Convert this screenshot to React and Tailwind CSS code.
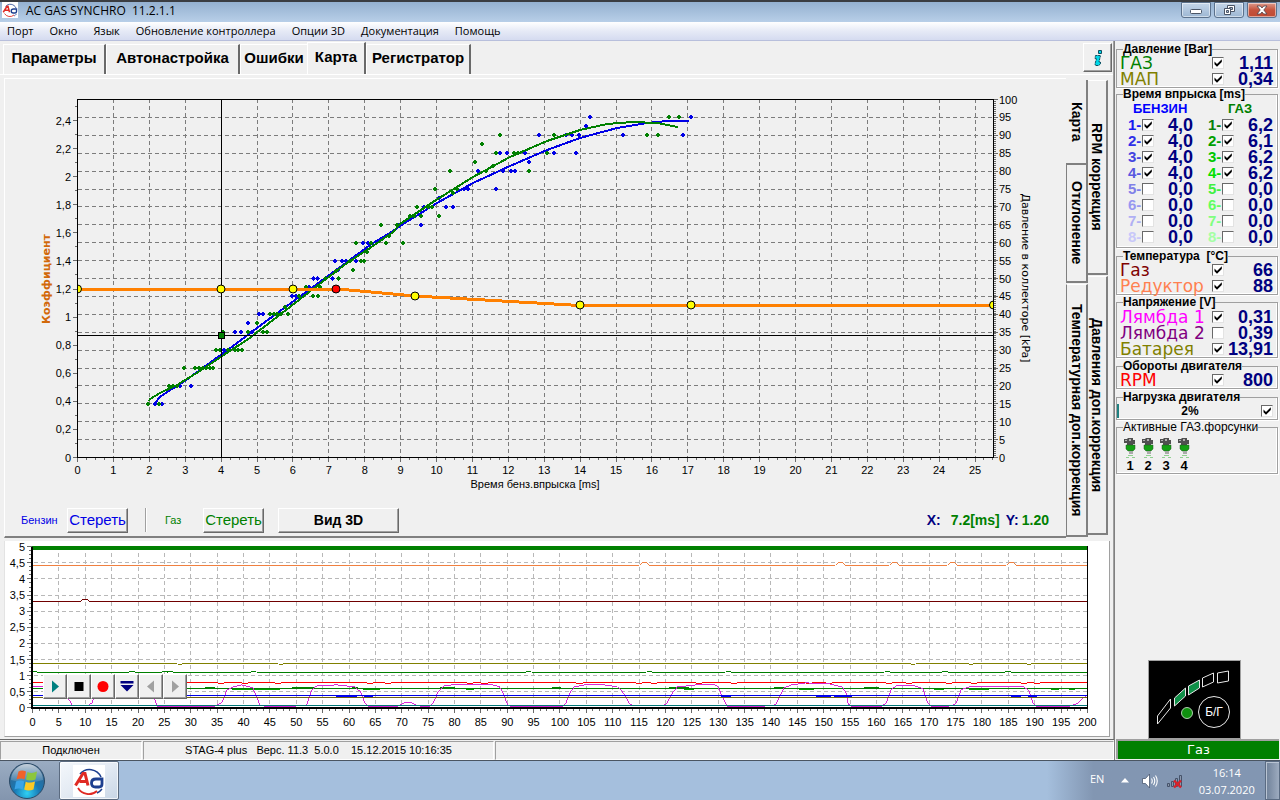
import React from "react";

/* ---------- shared bits ---------- */

const ARIAL = "font-['Liberation_Sans',Arial,sans-serif]";
const WIDE = "font-['DejaVu_Sans',Verdana,sans-serif]";
const SEGOE = "font-['Open_Sans','Noto_Sans',sans-serif]";
const RAISED =
  "border border-t-white border-l-white border-r-[#696969] border-b-[#696969] shadow-[inset_-1px_-1px_0_#a0a0a0] bg-[#f0f0f0]";

function Check({ label, on }) {
  return (
    <span className="grid size-3 shrink-0">
      <input
        type="checkbox"
        aria-label={label}
        defaultChecked={on}
        className="peer col-start-1 row-start-1 size-3 appearance-none border border-t-[#696969] border-l-[#696969] border-r-[#e3e3e3] border-b-[#e3e3e3] bg-white"
      />
      <svg viewBox="0 0 12 12" className="pointer-events-none col-start-1 row-start-1 hidden size-3 peer-checked:block" aria-hidden="true">
        <path d="M2.500 4.500 L5 7 L9.800 2.200 V5 L5 9.800 L2.500 7.300 Z" fill="#000" />
      </svg>
    </span>
  );
}

function Logo({ className }) {
  return (
    <svg viewBox="0 0 32 32" className={className} aria-hidden="true">
      <rect width="32" height="32" fill="#fff" />
      <path d="M7 9 A12.5 12.5 0 0 1 28 12" fill="none" stroke="#1d3f8f" strokeWidth="1.6" />
      <path d="M29 24 A13 13 0 0 1 24 28" fill="none" stroke="#1d3f8f" strokeWidth="1.4" />
      <path d="M5 23 A12.5 12.5 0 0 0 24 26" fill="none" stroke="#e02a24" strokeWidth="1.8" />
      <path d="M2.500 20.500 L10 8.500 H12 L15 20.500 M6.500 16.500 H13.500" fill="none" stroke="#e02a24" strokeWidth="3" />
      <path d="M29 14 H23 Q18.500 14 18.500 18 Q18.500 22 22.500 22 H26 Q29 22 29 19 V12.500" fill="none" stroke="#1d3f8f" strokeWidth="2.800" />
    </svg>
  );
}

/* ---------- title bar and menu ---------- */

const CAPTION =
  "flex h-4 w-[30px] items-center justify-center rounded-b-[3px] border border-[#5b718c] shadow-[inset_0_0_0_1px_#ffffff80]";

function TitleBar() {
  return (
    <header className="flex h-[22px] items-start border-t-2 border-[#3a3d42] bg-linear-to-b from-[#94b1d0] to-[#b8cfe8] pr-[3px] pl-0.5">
      <Logo className="size-4" />
      <h1 className={`${SEGOE} ml-2 text-xs leading-[18px] whitespace-pre text-black`}>AC GAS SYNCHRO  11.2.1.1</h1>
      <div className="ml-auto flex gap-[3px]">
        <button aria-label="Свернуть" className={`${CAPTION} bg-linear-to-b from-[#c5d6e9] to-[#9db7d3]`}>
          <svg viewBox="0 0 12 6" className="mt-1 h-1.5 w-3"><rect x="0.5" y="0.5" width="11" height="4" rx="1" fill="#fff" stroke="#4b5566" /></svg>
        </button>
        <button aria-label="Восстановить" className={`${CAPTION} bg-linear-to-b from-[#c5d6e9] to-[#9db7d3]`}>
          <svg viewBox="0 0 12 12" className="size-3" fill="#fff" stroke="#4b5566">
            <path d="M4.500 1.500h7v6h-7z" /><path d="M6.500 3.500h3v2h-3z" fill="#a9c0da" />
            <path d="M1.500 4.500h6v6h-6z" /><path d="M3.500 6.500h2v2h-2z" fill="#a9c0da" />
          </svg>
        </button>
        <button aria-label="Закрыть" className={`${CAPTION} bg-linear-to-b from-[#dc9a8c] via-[#c5523c] to-[#bf4a33]`}>
          <svg viewBox="0 0 12 10" className="h-2.5 w-3">
            <path d="M1 1h3.300l1.700 2 1.700-2h3.300l-3.200 4 3.200 4h-3.300l-1.700-2-1.700 2H1L4.200 5z" fill="#fff" stroke="#5a4a50" strokeWidth="0.9" />
          </svg>
        </button>
      </div>
    </header>
  );
}

const MENU = ["Порт", "Окно", "Язык", "Обновление контроллера", "Опции 3D", "Документация", "Помощь"];

function MenuBar() {
  return (
    <nav className={`${SEGOE} flex h-[19px] items-center gap-4 border-b border-[#b8bfdc] bg-linear-to-b from-white via-[#e6eaf6] to-[#d5dbf0] px-[7px] text-[11px]`}>
      {MENU.map((m) => (
        <button key={m} className="whitespace-nowrap">{m}</button>
      ))}
    </nav>
  );
}

const INACTIVE = "h-[30px] border-t border-white";
const TABS = [
  { name: "Параметры", cls: `w-[103px] ${INACTIVE} border-r-2 border-r-[#696969]` },
  { name: "Автонастройка", cls: `w-[134px] ${INACTIVE} border-r-2 border-r-[#696969]` },
  { name: "Ошибки", cls: `w-[67px] ${INACTIVE}` },
  { name: "Карта", cls: "w-[59px] h-8 border-t border-white border-r-2 border-r-[#696969]" },
  { name: "Регистратор", cls: `w-[105px] ${INACTIVE} border-r-2 border-r-[#696969]` },
];

function TabRow() {
  return (
    <div className="flex h-[34px] items-end border-b border-white pl-[3px]">
      {TABS.map((t) => (
        <button
          key={t.name}
          className={`${ARIAL} ${t.cls} border-l border-l-white pb-1 text-center text-[15px] leading-6 font-bold whitespace-nowrap text-black`}
        >
          {t.name}
        </button>
      ))}
      <button aria-label="Информация" className={`${RAISED} mr-px mb-0.5 ml-auto flex size-[29px] items-center justify-center`}>
        <svg viewBox="0 0 10 16" className="h-4 w-2.5">
          <path d="M5.500 0.500h3v3h-3z" fill="#00d8e8" stroke="#003c50" strokeWidth="0.9" />
          <path d="M2.500 5.500h5l-1.500 6.500h1.500v2l-2 1.500h-3l-0.500-1.500 1.500-5.500h-1.500z" fill="#00d8e8" stroke="#003c50" strokeWidth="0.9" strokeDasharray="2 0.600" />
        </svg>
      </button>
    </div>
  );
}

/* ---------- map chart ---------- */

const MX = (v) => 77.5 + v * 35.9;
const MK = (v) => 457.5 - v * 3.58;
const MC = (v) => 457.5 - v * 140.4;

const GREEN_DOTS = [
  [148, 15], [159, 15], [169, 20], [173, 20], [177, 20], [195, 25], [199, 25], [203, 25], [206, 25], [210, 25], [213, 25],
  [184, 25], [216, 30], [220, 30], [228, 30], [235, 30], [238, 30], [242, 30], [223, 35], [248, 35], [263, 35], [267, 35], [257, 37.5],
  [270, 40], [274, 40], [277, 40], [281, 40], [288, 40], [285, 42], [313, 45], [318, 45], [299, 45], [306, 47.5], [320, 47.500],
  [325, 50], [338, 50], [336, 52], [353, 52.5], [350, 55], [361, 55], [364, 55], [367, 57.5], [356, 60], [371, 60], [386, 60], [403, 60],
  [389, 62], [381, 65], [397, 65], [410, 67.5], [414, 67.5], [421, 67.5], [439, 67.5], [417, 70], [428, 70], [432, 70], [435, 75], [453, 74],
  [457, 75], [450, 80], [486, 80], [529, 80], [475, 82.5], [493, 81.5], [482, 87.5], [496, 85], [514, 85], [518, 85], [547, 85],
  [500, 90], [554, 90], [647, 90], [658, 90], [669, 95], [679, 95],
];
const BLUE_DOTS = [
  [155, 15], [159, 15], [162, 15], [180, 20], [191, 20], [184, 25], [224, 30], [235, 35], [241, 35], [252, 35], [248, 37.5],
  [259, 40], [263, 40], [281, 40], [292, 45], [296, 45], [302, 45], [309, 47.5], [313, 50], [317, 50], [332, 50], [338, 52.5],
  [335, 55], [342, 55], [346, 55], [356, 55], [363, 60], [368, 60], [399, 65], [421, 65], [424, 70], [446, 70], [453, 70],
  [439, 72.5], [464, 75], [468, 75], [496, 75], [478, 80], [503, 80], [511, 80], [515, 80], [529, 82.5], [500, 85], [507, 85],
  [525, 85], [554, 85], [576, 85], [539, 90], [566, 90], [572, 90], [579, 90], [623, 90], [683, 90], [586, 92.5], [590, 95], [691, 95],
];
const BLUE_CURVE = "155,403 160,397 167,392 182,383 200,370 233,346 257,328 280,311 313,287 347,262 370,245 393,231 400,226 437,203 473,183 510,166 547,150 580,138 617,128 647,123 667,121 689,121";
const GREEN_CURVE = "149,401 150,399 160,393 177,385 200,371 228,352 247,340 277,317 313,289 347,263 370,248 393,232 400,224 433,202 473,177 510,157 547,141 580,130 607,124 633,122 657,123 678,127";
const KNOTS = [[77, 289], [221, 289], [293, 289], [336, 289], [415, 296], [580, 305], [691, 305], [993, 305]];

const diamonds = (pts) => pts.map(([x, k]) => `M${x - 2.5} ${MK(k)}l2.5 -2.500l2.500 2.500l-2.500 2.500z`).join("");
const range = (n) => Array.from({ length: n }, (_, i) => i);

function MapChart() {
  return (
    <svg viewBox="5 79 1061 421" className={`${ARIAL} block h-auto w-full text-[11px]`} role="img" aria-label="Карта коэффициентов">
      <g stroke="#7c7c7c" strokeDasharray="4 3" shapeRendering="crispEdges">
        {range(25).map((i) => <line key={i} x1={MX(i + 1)} x2={MX(i + 1)} y1="99" y2="457" />)}
        {range(19).map((i) => <line key={i} x1="78" x2="993" y1={MK(5 * (i + 1))} y2={MK(5 * (i + 1))} />)}
      </g>
      <g stroke="#6a6a6a" shapeRendering="crispEdges">
        {range(103).map((i) => <line key={i} x1={MX(i / 4)} x2={MX(i / 4)} y1="458" y2={i % 4 ? 460 : 462} />)}
        {range(26).map((i) => <line key={i} x1={i % 2 ? 75 : 73} x2="77" y1={MC(i / 10)} y2={MC(i / 10)} />)}
        {range(179).map((i) => <line key={i} x1="994" x2="996" y1={99.5 + i * 2} y2={99.5 + i * 2} />)}
        {range(21).map((i) => <line key={i} x1="994" x2="998" y1={MK(i * 5)} y2={MK(i * 5)} />)}
      </g>
      <rect x="77.500" y="99.500" width="916" height="358" fill="none" stroke="#000" shapeRendering="crispEdges" />
      <g textAnchor="middle">{range(26).map((i) => <text key={i} x={MX(i)} y="474">{i}</text>)}</g>
      <g textAnchor="end">{range(13).map((i) => <text key={i} x="71" y={MC(i / 5) + 4}>{String(i / 5 === Math.round(i / 5) ? i / 5 : (i / 5).toFixed(1)).replace(".", ",")}</text>)}</g>
      <g>{range(21).map((i) => <text key={i} x="999" y={MK(i * 5) + 4}>{i * 5}</text>)}</g>
      <text x="535" y="488" textAnchor="middle">Время бенз.впрыска [ms]</text>
      <text transform="translate(50 279) rotate(-90)" textAnchor="middle" className={`${WIDE} font-bold`} fill="#d2690a">Коэффициент</text>
      <text transform="translate(1022 278) rotate(90)" textAnchor="middle" className={WIDE}>Давление в коллекторе [kPa]</text>
      <g shapeRendering="crispEdges">
        <path d={diamonds(BLUE_DOTS)} fill="#0000e6" />
        <polyline points={BLUE_CURVE} fill="none" stroke="#0000e6" strokeWidth="2" />
        <path d={diamonds(GREEN_DOTS)} fill="#008000" />
        <polyline points={GREEN_CURVE} fill="none" stroke="#008000" strokeWidth="2" />
        <path d="M221.500 99V457M78 335.500H993" stroke="#000" />
        <polyline points="77,289.500 343,289.500 415,296 580,305.500 993,305.500" fill="none" stroke="#ff8000" strokeWidth="3" />
        <rect x="218.500" y="332.500" width="6" height="6" fill="#008000" stroke="#000" />
      </g>
      {KNOTS.map(([x, y], i) => {
        if (i === 0) return <path key={i} d="M77.500 285a4 4 0 0 1 0 8z" fill="#ff0" stroke="#000" />;
        if (i === 7) return <path key={i} d="M993.500 301a4 4 0 0 0 0 8z" fill="#ff0" stroke="#000" />;
        return <circle key={i} cx={x} cy={y} r="4" fill={i === 3 ? "#f00" : "#ff0"} stroke="#000" />;
      })}
    </svg>
  );
}

function MapControls() {
  return (
    <div className={`${ARIAL} flex h-9 items-center pt-1 pr-[17px] pl-4`}>
      <span className="w-[46px] text-[11px] text-[#0000e6]">Бензин</span>
      <button className={`${RAISED} h-[25px] w-[61px] text-[15px] leading-5 text-[#0000e6]`}>Стереть</button>
      <span className="ml-[17px] h-6 border-r border-r-white border-l border-l-[#a0a0a0]" />
      <span className="ml-[18px] w-[38px] text-[11px] text-[#008000]">Газ</span>
      <button className={`${RAISED} h-[25px] w-[61px] text-[15px] leading-5 text-[#008000]`}>Стереть</button>
      <button className={`${RAISED} ml-[14px] h-[25px] w-[121px] text-[14px] leading-5 font-bold`}>Вид 3D</button>
      <p className="ml-auto flex items-center text-[14px] font-bold text-[#008000]">
        <span className="w-6 text-[#000080]">X:</span>
        <span>7.2[ms]</span>
        <span className="ml-1.5 w-4 text-[#000080]">Y:</span>
        <span>1.20</span>
      </p>
    </div>
  );
}

function SideTab({ children, className }) {
  return (
    <button className={`${ARIAL} flex items-center justify-center text-[14px] leading-4 font-bold whitespace-nowrap [writing-mode:vertical-rl] ${className}`}>
      {children}
    </button>
  );
}

function MapPanel() {
  return (
    <section className="flex pt-[3px] pr-[5px] pb-[3px] pl-1">
      <div className="min-w-0 flex-1 border-t border-b-2 border-l border-t-white border-b-[#808080] border-l-white">
        <MapChart />
        <MapControls />
      </div>
      <div className="flex w-[22px] flex-col pt-0.5 pb-px">
        <SideTab className="h-[83px] border-r-2 border-[#808080] pl-0.5">Карта</SideTab>
        <SideTab className="h-[120px] border-t-2 border-r-2 border-b-2 border-l border-[#808080]">Отклонение</SideTab>
        <SideTab className="mt-px flex-1 border-t border-r-2 border-b-2 border-l border-[#808080] border-t-white">Температурная доп.коррекция</SideTab>
      </div>
      <div className="flex w-5 flex-col pt-0.5 pb-[3px]">
        <SideTab className="h-[195px] border-t border-r-2 border-b-2 border-[#808080] border-t-white">RPM коррекция</SideTab>
        <SideTab className="mt-px flex-1 border-t border-r-2 border-b-2 border-[#808080] border-t-white">Давления доп.коррекция</SideTab>
      </div>
    </section>
  );
}

/* ---------- recorder ---------- */

const RX = (v) => 32.5 + v * 5.28;
const RY = (v) => 708 - v * 32.25;

const LAMBDA =
  "32,687 44,687 60,688 68,698 72,705 75,706 88,706 92,703 94,698 98,688 110,685 140,686 150,690 154,698 158,707 213,707 222,703 227,690 233,687 242,685 253,688 257,697 260,705 267,707 302,706 307,705 312,690 317,686 337,685 355,687 361,692 365,703 369,707 397,707 405,703 412,703 418,706 430,707 434,702 439,691 445,686 453,685 493,685 500,687 503,692 508,705 512,707 562,707 566,704 571,692 575,687 585,685 605,685 618,687 623,692 631,705 638,706 663,706 667,704 673,693 678,687 697,685 715,685 719,687 723,697 728,707 773,706 777,704 780,698 785,688 792,685 807,683 830,684 843,687 847,693 849,704 853,707 882,707 887,703 892,690 897,686 915,686 924,689 928,702 933,707 953,706 957,703 962,690 970,687 1025,687 1030,691 1034,703 1038,707 1068,707 1078,704 1088,695";

function trace(y, bumps, dy, half) {
  return bumps.reduce((d, x) => d + `H${x - half}L${x - 2} ${y + dy}H${x + 2}L${x + half} ${y}`, `M32 ${y}`) + "H1088";
}
const segs = (y, list) => list.map(([a, b]) => `M${a} ${y}H${b}`).join("");

function RecorderChart() {
  return (
    <svg viewBox="5 541 1105 195" className={`${ARIAL} block h-auto w-full text-[11px]`} role="img" aria-label="Регистратор">
      <g shapeRendering="crispEdges" fill="none">
        <g stroke="#b8b8b8" strokeDasharray="4 3">
          {range(39).map((i) => <line key={i} x1={RX(5 * (i + 1))} x2={RX(5 * (i + 1))} y1="553" y2="707" />)}
          {range(9).map((i) => <line key={i} x1="34" x2="1088" y1={RY((i + 1) / 2)} y2={RY((i + 1) / 2)} />)}
        </g>
        <g stroke="#6a6a6a">
          {range(161).map((i) => <line key={i} x1={RX(i * 1.25)} x2={RX(i * 1.25)} y1="709" y2={i % 4 ? 711 : 713} />)}
          {range(41).map((i) => <line key={i} x1={i % 4 ? 29 : 27} x2="32" y1={RY(i / 8)} y2={RY(i / 8)} />)}
        </g>
        <path d={trace(565.5, [645, 841, 895, 953, 1012], -3, 5)} stroke="#f08040" />
        <path d={trace(601.5, [85], -2, 4)} stroke="#700000" />
        <path d={trace(663.5, [180, 281, 914, 972, 1030], 1, 3)} stroke="#808000" />
        <path d={trace(672.5, [34, 132, 165, 170, 254, 529, 650, 729, 888, 946, 1009], -1, 3)} stroke="#008000" />
        <path d={trace(682.5, [221, 245, 278, 370, 388, 470, 485, 580, 640, 655, 700, 735, 810, 830, 890, 910, 950, 975, 1025, 1038], 1, 5)} stroke="#f00" />
        <path d="M32 688.500H1088" stroke="#008000" />
        <path d={segs(687.5, [[205, 215], [292, 314], [352, 358], [440, 455], [552, 562], [670, 690], [775, 785], [865, 880]])} stroke="#008000" />
        <path d={segs(689.5, [[232, 280], [363, 380], [466, 474], [685, 695], [800, 815], [935, 945], [970, 990], [1052, 1060], [1070, 1076]])} stroke="#00a000" />
        <polyline points={LAMBDA} stroke="#d828d8" />
        <path d="M32 695.500H1088" stroke="#0000e6" />
        <path d={segs(696.5, [[336, 357], [364, 373], [722, 732], [817, 832], [835, 853], [1012, 1022], [1029, 1038]])} stroke="#0000ff" />
        <path d="M32 697.500H1088" stroke="#706010" />
        <path d="M32 705.500H1088" stroke="#007878" />
        <path d="M32 548H1088" stroke="#008000" strokeWidth="4" />
        <path d="M31 708H1089" stroke="#000" strokeWidth="2" />
        <path d="M32 547V709" stroke="#000" strokeWidth="2" />
        <path d="M1088.500 546V709" stroke="#000" />
      </g>
      <g textAnchor="middle">{range(41).map((i) => <text key={i} x={RX(i * 5)} y="726">{i * 5}</text>)}</g>
      <g textAnchor="end">{range(11).map((i) => <text key={i} x="25" y={RY(i / 2) + 4}>{String(i / 2).replace(".", ",")}</text>)}</g>
    </svg>
  );
}

const TOOLS = [
  ["Старт", <path key="p" d="M5 2.500L12 8.500L5 14.500z" fill="#008080" />],
  ["Стоп", <rect key="p" x="3.500" y="4" width="9" height="9" fill="#000" />],
  ["Запись", <circle key="p" cx="8" cy="8.500" r="5.500" fill="#f00" />],
  ["Сохранить", <path key="p" d="M1.500 3h13v2.500h-13zM1.500 7h13L8 13.500z" fill="#000080" />],
  ["Назад", <path key="p" d="M11 2.500L4 8.500L11 14.500z" fill="#a0a0a0" />],
  ["Вперёд", <path key="p" d="M5 2.500L12 8.500L5 14.500z" fill="#a0a0a0" />],
];

function Recorder() {
  return (
    <section className="pr-[3px] pb-0.5 pl-1">
      <div className="relative border-r border-b border-l border-r-[#a0a0a0] border-b-[#a0a0a0] border-l-[#e3e3e3] bg-white">
        <RecorderChart />
        <div className="absolute bottom-[37px] left-[38px] flex">
          {TOOLS.map(([name, shape]) => (
            <button key={name} aria-label={name} className={`${RAISED} flex h-[25px] w-6 items-center justify-center`}>
              <svg viewBox="0 0 16 16" className="size-4">{shape}</svg>
            </button>
          ))}
        </div>
      </div>
    </section>
  );
}

function StatusBar() {
  return (
    <footer className={`${ARIAL} flex h-[21px] border-t border-[#696969] pt-px text-[11px] leading-4 text-black`}>
      <span className="w-[142px] border border-t-[#a0a0a0] border-r-white border-b-white border-l-[#a0a0a0] text-center">Подключен</span>
      <span className="ml-px w-[351px] border border-t-[#a0a0a0] border-r-white border-b-white border-l-[#a0a0a0] text-center whitespace-pre">STAG-4 plus   Верс. 11.3  5.0.0    15.12.2015 10:16:35</span>
      <span className="ml-px flex-1 border border-t-[#a0a0a0] border-r-white border-b-white border-l-[#a0a0a0]" />
    </footer>
  );
}

/* ---------- readings ---------- */

function Group({ title, className = "", legendClass = "font-bold", children }) {
  return (
    <fieldset className={`min-w-0 border border-[#a0a0a0] shadow-[inset_-1px_-1px_0_#fff,1px_1px_0_#fff] ${className}`}>
      <legend className={`ml-1.5 text-[12px] leading-3 whitespace-pre text-black ${legendClass}`}>{title}</legend>
      {children}
    </fieldset>
  );
}

function Reading({ name, color, value, on }) {
  return (
    <div className="flex h-4 items-center pr-1 pl-[3px] leading-4">
      <span className={`${WIDE} w-[92px] text-[17px] whitespace-nowrap ${color}`}>{name}</span>
      <Check label={name} on={on} />
      <output className="flex-1 text-right text-[18px] font-bold text-[#000080]">{value}</output>
    </div>
  );
}

const INJ = [
  ["4,0", "6,2", "text-[#1a1af0]", "text-[#0a800a]"],
  ["4,0", "6,1", "text-[#3030e8]", "text-[#00a000]"],
  ["4,0", "6,2", "text-[#4444e0]", "text-[#00c800]"],
  ["4,0", "6,2", "text-[#5858e0]", "text-[#00e000]"],
  ["0,0", "0,0", "text-[#8080e8]", "text-[#40f040]"],
  ["0,0", "0,0", "text-[#9898f0]", "text-[#60ff60]"],
  ["0,0", "0,0", "text-[#b0b0f4]", "text-[#80ff80]"],
  ["0,0", "0,0", "text-[#c8c8fa]", "text-[#a4ffa4]"],
];

function Injector({ n, value, color, kind }) {
  return (
    <span className="flex flex-1 items-center">
      <span className={`w-3.5 text-[15px] font-bold ${color}`}>{n}-</span>
      <Check label={`${kind} ${n}`} on={n <= 4} />
      <output className="flex-1 text-right text-[18px] font-bold text-[#000080]">{value}</output>
    </span>
  );
}

function InjectorIcon() {
  return (
    <svg viewBox="0 0 14 22" className="h-[22px] w-3.5 shrink-0" aria-hidden="true">
      <path d="M1 2h3l1-1h5v2h2v4h-2v2H4V6H1z" fill="#505050" />
      <path d="M2 3h2v1H2zM6 2h2v2H6z" fill="#b0b0b0" />
      <path d="M3 8h9v4l-2 2H5l-2-2z" fill="#14a014" stroke="#225522" strokeWidth="0.500" />
      <path d="M6 14h4v3H6z" fill="#aaa" />
      <path d="M5 18.500h5M3 20.500h3M9 20.500h3" stroke="#90d090" />
    </svg>
  );
}

function Gauge() {
  return (
    <button aria-label="Переключатель Бензин/Газ" className="ml-[33px] block w-[93px] border border-[#a0a0a0] bg-black">
      <svg viewBox="0 0 91 77" className={`${ARIAL} block h-auto w-full`}>
        <g fill="none" stroke="#e8e8e8" strokeWidth="1">
          <path d="M8.500 63v-8l13-17v9z" />
          <path d="M25.500 45v-8l11-10v8z" fill="#109048" />
          <path d="M39.500 34v-9l11-6v8z" fill="#109048" />
          <path d="M53.500 26v-9l11-5v9z" />
          <path d="M68.500 22v-10l11-2v10z" />
          <circle cx="65" cy="51" r="15.500" />
        </g>
        <circle cx="38" cy="52" r="5.500" fill="#109010" stroke="#d8f0d8" strokeWidth="0.800" />
        <text x="65" y="55" textAnchor="middle" fill="#fff" className="text-[12px]">Б/Г</text>
      </svg>
    </button>
  );
}

function Readings() {
  return (
    <aside className={`${ARIAL} flex w-[166px] shrink-0 flex-col border-l border-[#808080] pt-0.5`}>
      <div className="pr-0.5 pl-px">
        <Group title="Давление [Bar]">
          <Reading name="ГАЗ" color="text-[#008000]" value="1,11" on />
          <Reading name="МАП" color="text-[#808000]" value="0,34" on />
        </Group>
        <Group title="Время впрыска [ms]" className="pb-0.5">
          <div className="flex h-[17px] items-center text-[13px] font-bold">
            <span className="w-[92px] pl-4 text-[#0000ff]">БЕНЗИН</span>
            <span className="pl-[19px] text-[#008000]">ГАЗ</span>
          </div>
          {INJ.map(([b, g, cb, cg], i) => (
            <div key={i} className="flex h-4 items-center gap-[15px] pr-1 pl-[11px] leading-4">
              <Injector n={i + 1} value={b} color={cb} kind="Бензин" />
              <Injector n={i + 1} value={g} color={cg} kind="Газ" />
            </div>
          ))}
        </Group>
        <Group title="Температура  [°C]" className="mt-0.5">
          <Reading name="Газ" color="text-[#800000]" value="66" on />
          <Reading name="Редуктор" color="text-[#ff8050]" value="88" on />
        </Group>
        <Group title="Напряжение [V]" className="mt-px pt-px">
          <Reading name="Лямбда 1" color="text-[#ff00ff]" value="0,31" on />
          <Reading name="Лямбда 2" color="text-[#800080]" value="0,39" />
          <Reading name="Батарея" color="text-[#808000]" value="13,91" on />
        </Group>
        <Group title="Обороты двигателя" className="mt-0.5">
          <Reading name="RPM" color="text-[#ff0000]" value="800" on />
        </Group>
        <Group title="Нагрузка двигателя" className="mt-0.5">
          <div className="flex h-4 items-center pr-1">
            <span className="h-3.5 w-0.5 bg-[#208080]" />
            <span className="flex-1 text-center text-[12px] font-bold">2%</span>
            <Check label="Нагрузка двигателя" on />
          </div>
        </Group>
        <Group title="Активные ГАЗ.форсунки" legendClass="" className="mt-px">
          <div className="flex h-10 gap-1 pt-1 pl-1.5 text-[13px] leading-[14px] font-bold">
            {[1, 2, 3, 4].map((n) => (
              <span key={n} className="flex w-3.5 flex-col items-center">
                <InjectorIcon />
                {n}
              </span>
            ))}
          </div>
        </Group>
      </div>
      <div className="mt-auto">
        <Gauge />
        <p className={`${WIDE} mr-px mb-px ml-px h-5 border-t-2 border-l-2 border-[#a0a0a0] bg-[#008000] text-center text-[13px] leading-[18px] text-white`}>Газ</p>
      </div>
    </aside>
  );
}

/* ---------- task bar ---------- */

function StartOrb() {
  return (
    <svg viewBox="0 0 38 38" className="size-[38px]" aria-hidden="true">
      <defs>
        <radialGradient id="orb" cx="50%" cy="85%" r="80%">
          <stop offset="0" stopColor="#2fd0f4" />
          <stop offset="0.450" stopColor="#1878b4" />
          <stop offset="1" stopColor="#3a6288" />
        </radialGradient>
        <linearGradient id="gloss" x1="0" y1="0" x2="0" y2="1">
          <stop offset="0" stopColor="#fff" stopOpacity="0.700" />
          <stop offset="1" stopColor="#fff" stopOpacity="0.100" />
        </linearGradient>
      </defs>
      <circle cx="19" cy="19" r="17.500" fill="url(#orb)" stroke="#2b4a66" />
      <path d="M3 18A16 16 0 0 1 35 18Q19 23 3 18z" fill="url(#gloss)" />
      <path d="M10.500 9.500Q14 7.500 18 9.500L16.500 17.500Q13 15.500 8.500 17.500z" fill="#f0622a" />
      <path d="M19.500 10Q24 12 29 9.500L27.500 17.500Q22 19.500 18 17.500z" fill="#8cc63e" />
      <path d="M8 19.500Q12.500 17.500 16.200 19.500L14.700 27.500Q11 25.500 6.500 27.500z" fill="#3aa4e8" />
      <path d="M17.700 19.700Q22 21.500 27 19.500L25.500 27.500Q20.500 29.500 16.200 27.500z" fill="#fbc926" />
    </svg>
  );
}

function TaskBar() {
  return (
    <footer className={`${SEGOE} flex h-10 items-stretch border-t border-[#4a5562] bg-[#a5bfdd] text-white`}>
      <button aria-label="Пуск" className="flex w-[59px] items-center bg-linear-to-b from-[#9aacc2] to-[#8395ae] pl-2">
        <StartOrb />
      </button>
      <button aria-label="AC GAS SYNCHRO" className="flex w-[60px] items-center justify-center rounded-[2px] border border-[#5b6b80] bg-linear-to-br from-[#f4f7fb] via-[#e3eaf3] to-[#c8d6e6] shadow-[inset_0_0_0_1px_#ffffffb0]">
        <Logo className="size-8" />
      </button>
      <div className="ml-auto flex w-[233px] items-center bg-linear-to-r from-[#a5bfdd] via-[#8296b2] via-20% to-[#8296b2]">
        <span className="-mt-1 ml-[43px] text-[11px] leading-4">EN</span>
        <svg viewBox="0 0 8 5" className="ml-[17px] h-[5px] w-2"><path d="M4 0l4 4.500H0z" fill="#fff" /></svg>
        <svg viewBox="0 0 18 16" className="ml-3 h-4 w-[18px]">
          <path d="M1.500 5.500h3l4-4.500v14l-4-4.500h-3z" fill="#fff" stroke="#4a5870" strokeWidth="0.800" />
          <path d="M10.500 5.500q1.500 2.500 0 5M12.500 4q2.500 4 0 8M14.500 2.500q3.500 5.500 0 11" fill="none" stroke="#fff" strokeWidth="1.100" />
        </svg>
        <svg viewBox="0 0 18 16" className="ml-[7px] h-4 w-[18px]">
          <g fill="#8b98ac" stroke="#46536a">
            <path d="M1.500 10.500h2v3h-2zM5.500 8.500h2v5h-2zM9.500 5.500h2v8h-2zM13.500 2.500h2v11h-2z" />
          </g>
          <path d="M8 7.500l7 7M15 7.500l-7 7" stroke="#d8202a" strokeWidth="2.400" />
        </svg>
        <div className="flex-1 pl-1 text-center text-[11px] leading-[17px]">
          <div>16:14</div>
          <div>03.07.2020</div>
        </div>
        <button aria-label="Свернуть все окна" className="h-full w-[15px] border border-[#5a6b82] bg-linear-to-r from-[#6f8199] to-[#9dabbf] shadow-[inset_1px_1px_0_#b9c4d3]" />
      </div>
    </footer>
  );
}

export default function App() {
  return (
    <div className="flex min-h-screen flex-col bg-[#f0f0f0]">
      <TitleBar />
      <MenuBar />
      <main className="flex flex-1">
        <div className="flex min-w-0 flex-1 flex-col">
          <div className="border-r border-[#a0a0a0]">
            <TabRow />
            <MapPanel />
            <Recorder />
          </div>
          <div className="mt-auto"><StatusBar /></div>
        </div>
        <Readings />
      </main>
      <TaskBar />
    </div>
  );
}
